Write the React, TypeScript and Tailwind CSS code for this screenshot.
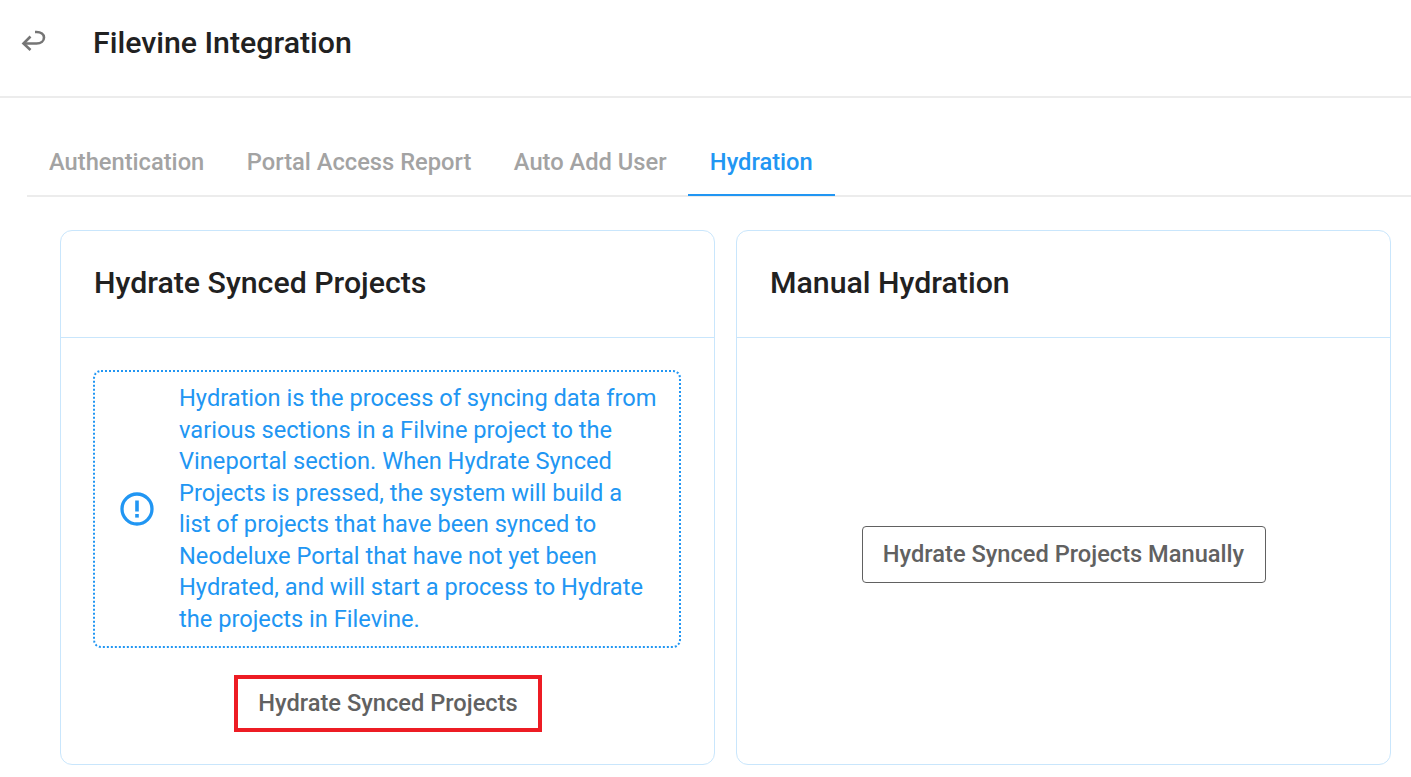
const tabs = ["Authentication", "Portal Access Report", "Auto Add User"];

function BackIcon() {
    return (
        <svg width="26" height="26" viewBox="0 0 26 26" fill="none" stroke="#757575" strokeWidth="2.6">
            <path d="M2.5 17.5H15.5C20 17.5 23 15 23 11.5C23 8 20 6 15.5 6H14" />
            <path d="M9.5 10.5L2.5 17.5L9.5 24" />
        </svg>
    );
}

function InfoIcon() {
    return (
        <svg width="34" height="34" viewBox="0 0 34 34" fill="none" className="shrink-0">
            <circle cx="17" cy="17" r="15" stroke="#2196f3" strokeWidth="3.3" />
            <rect x="15.2" y="8.5" width="3.6" height="11" fill="#2196f3" />
            <rect x="15.2" y="22" width="3.6" height="3.6" fill="#2196f3" />
        </svg>
    );
}

export default function App() {
    return (
        <div className="h-[777px] w-[1411px] overflow-hidden bg-white font-['Roboto',sans-serif]">
            {/* Page header */}
            <div className="flex h-[98px] items-start border-b-2 border-[#ececec] pl-[21px] pt-[26px]">
                <BackIcon />
                <h1 className="ml-[46px] text-[30.3px] font-medium leading-[34px] text-[#212121]">Filevine Integration</h1>
            </div>

            {/* Tabs */}
            <div className="ml-[27px] mt-[33px] flex h-[66px] items-stretch border-b-2 border-[#ececec] pl-[0.75px]">
                {tabs.map((tab) => (
                    <div key={tab} className="flex items-center px-[21.25px] text-[23.7px] font-medium text-[#a3a3a3]">
                        {tab}
                    </div>
                ))}
                <div className="-mb-[1px] flex items-center border-b-2 border-[#2196f3] px-[22px] text-[23.7px] font-medium text-[#2196f3]">
                    Hydration
                </div>
            </div>

            <div className="ml-[60px] mt-[33px] flex w-[1331px] gap-[21px]">
                {/* Hydrate card */}
                <div className="flex h-[535px] w-[655px] flex-col rounded-xl border border-[#c9e6fc]">
                    <div className="flex h-[107px] shrink-0 items-center border-b border-[#c9e6fc] pl-[33px] pb-[2px] text-[30.3px] font-medium text-[#212121]">
                        Hydrate Synced Projects
                    </div>
                    <div className="flex flex-col items-center pl-[32px] pr-[33px] pt-[32px]">
                        <div className="flex h-[278px] w-full items-center rounded-lg border-2 border-dotted border-[#2196f3] pl-[25px] pr-[22px]">
                            <InfoIcon />
                            <p className="ml-[25px] text-[23.65px] leading-[31.5px] text-[#2196f3]">
                                Hydration is the process of syncing data from various sections in a Filvine project to the Vineportal section. When Hydrate Synced Projects is pressed, the system will build a list of projects that have been synced to Neodeluxe Portal that have not yet been Hydrated, and will start a process to Hydrate the projects in Filevine.
                            </p>
                        </div>
                        <button className="ml-[2px] mt-[27px] flex h-[57px] w-[308px] items-center justify-center border-4 border-[#ed1c24] text-[23.65px] font-medium text-[#616161]">
                            Hydrate Synced Projects
                        </button>
                    </div>
                </div>

                {/* Manual card */}
                <div className="flex h-[535px] w-[655px] flex-col rounded-xl border border-[#c9e6fc]">
                    <div className="flex h-[107px] shrink-0 items-center border-b border-[#c9e6fc] pl-[33px] pb-[2px] text-[30.3px] font-medium text-[#212121]">
                        Manual Hydration
                    </div>
                    <div className="flex flex-1 items-center justify-center pt-[7px]">
                        <button className="flex h-[57px] w-[404px] items-center justify-center rounded-[4px] border border-[#616161] text-[23.65px] font-medium text-[#616161]">
                            Hydrate Synced Projects Manually
                        </button>
                    </div>
                </div>
            </div>
        </div>
    );
}
